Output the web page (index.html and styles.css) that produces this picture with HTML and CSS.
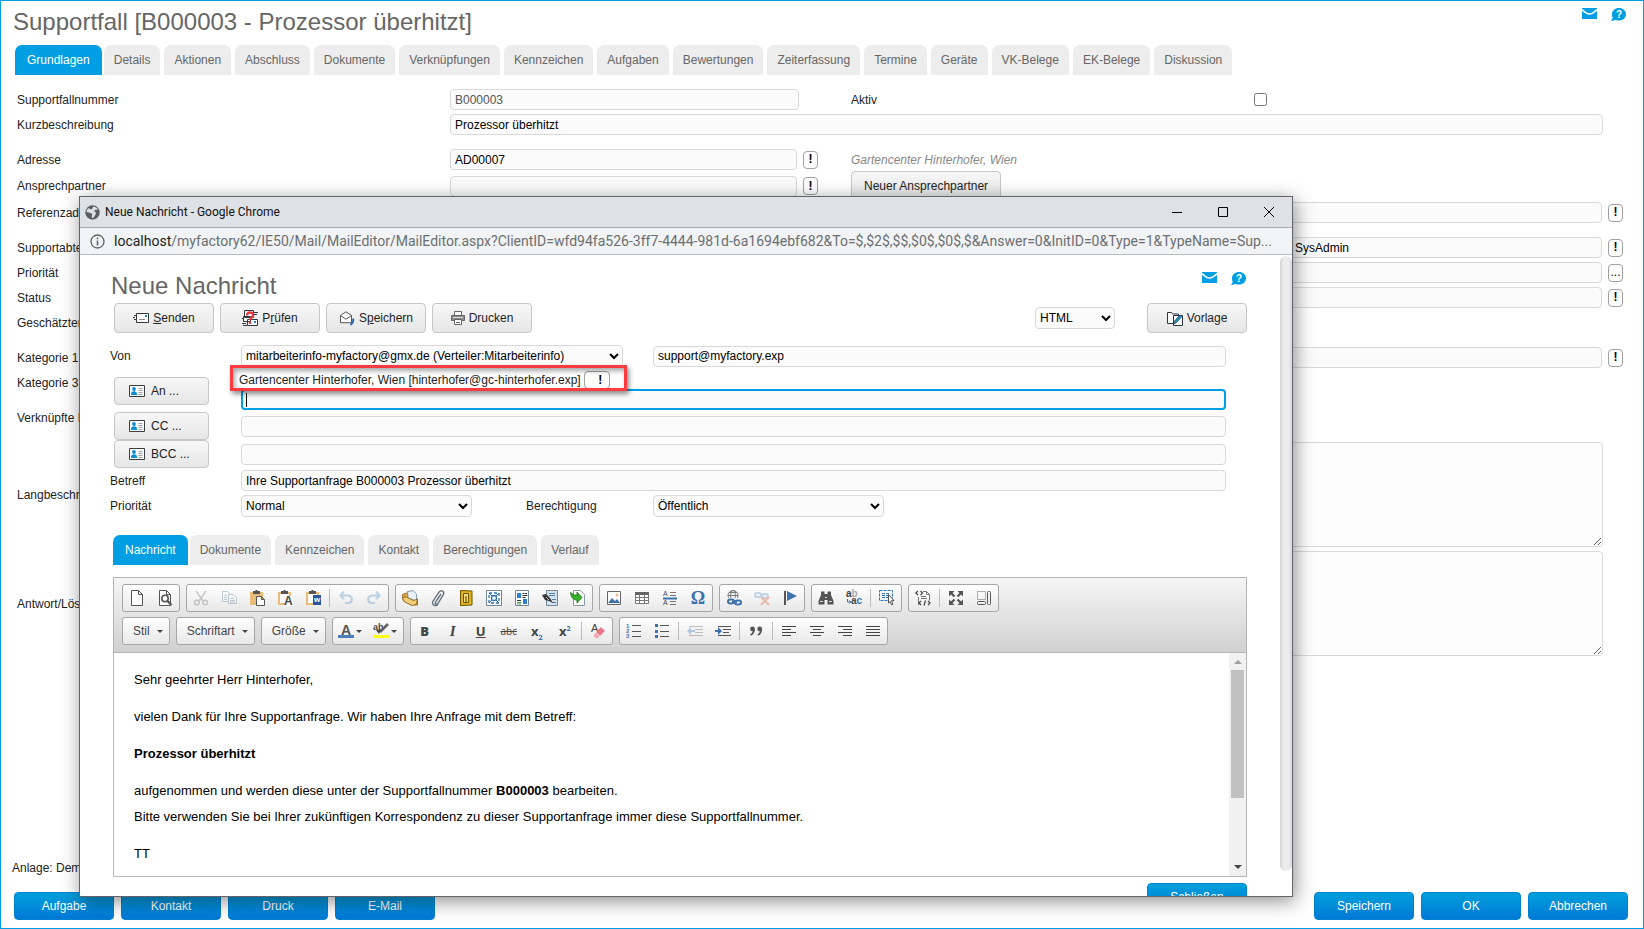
FILE: index.html
```html
<!DOCTYPE html>
<html lang="de">
<head>
    <meta charset="UTF-8">
    <meta name="viewport" content="width=device-width, initial-scale=1.0">
    <title>Supportfall</title>
    <link rel="stylesheet" href="styles.css">
</head>
<body>

    <!-- shared icons -->
    <svg class="sprite" aria-hidden="true">
        <symbol id="i-mail" viewBox="0 0 15 11">
            <path fill="#009fe3" d="M0 0h15v11H0z"/>
            <path fill="none" stroke="#fff" stroke-width="1.6" d="M0 1.6C3 4.6 5.4 6 7.5 6S12 4.6 15 1.6"/>
        </symbol>
        <symbol id="i-help" viewBox="0 0 15 13">
            <path fill="#009fe3" d="M8 0c4 0 7 2.700 7 6.300S12 12.600 8 12.600c-1.200 0-2.300-.2-3.200-.6L0 13l1.700-3C1.200 9 1 7.500 1 6.300 1 2.700 4 0 8 0z"/>
            <text x="8" y="10" text-anchor="middle" class="help-mark">?</text>
        </symbol>
        <symbol id="i-card" viewBox="0 0 16 12">
            <path fill="#fff" stroke="#3a3f44" d="M.5.5h15v11H.5z"/>
            <circle cx="5" cy="4" r="1.900" fill="#0a8fd0"/>
            <path fill="#0a8fd0" d="M2 10c0-3 1-3.700 3-3.700S8 7 8 10z"/>
            <path stroke="#9aa0a5" d="M9.500 3.500h4M9.500 5.500h4M9.500 7.500h4M9.500 9.500h4"/>
        </symbol>
    </svg>

    <div class="page">
        <div class="page-head">
            <h1>Supportfall [B000003 - Prozessor überhitzt]</h1>
            <div class="head-icons">
                <svg width="15" height="11"><use href="#i-mail"/></svg>
                <svg width="15" height="13"><use href="#i-help"/></svg>
            </div>
        </div>

        <nav class="tabs">
            <a class="tab active" href="#">Grundlagen</a>
            <a class="tab" href="#">Details</a>
            <a class="tab" href="#">Aktionen</a>
            <a class="tab" href="#">Abschluss</a>
            <a class="tab" href="#">Dokumente</a>
            <a class="tab" href="#">Verknüpfungen</a>
            <a class="tab" href="#">Kennzeichen</a>
            <a class="tab" href="#">Aufgaben</a>
            <a class="tab" href="#">Bewertungen</a>
            <a class="tab" href="#">Zeiterfassung</a>
            <a class="tab" href="#">Termine</a>
            <a class="tab" href="#">Geräte</a>
            <a class="tab" href="#">VK-Belege</a>
            <a class="tab" href="#">EK-Belege</a>
            <a class="tab" href="#">Diskussion</a>
        </nav>

        <form class="case-form">
            <div class="group">
                <div class="row">
                    <label for="nr">Supportfallnummer</label>
                    <div class="cell"><input class="field readonly" id="nr" type="text" value="B000003" readonly></div>
                    <label for="aktiv">Aktiv</label>
                    <div class="cell"><input id="aktiv" type="checkbox"></div>
                </div>
                <div class="row">
                    <label for="kurz">Kurzbeschreibung</label>
                    <div class="cell span"><input class="field" id="kurz" type="text" value="Prozessor überhitzt"></div>
                </div>
            </div>

            <div class="group address">
                <div class="row">
                    <label for="adr">Adresse</label>
                    <div class="cell"><input class="field" id="adr" type="text" value="AD00007"><button type="button" class="pick">!</button></div>
                    <i class="hint">Gartencenter Hinterhofer, Wien</i>
                </div>
                <div class="row tall">
                    <label for="ansp">Ansprechpartner</label>
                    <div class="cell"><input class="field" id="ansp" type="text"><button type="button" class="pick">!</button></div>
                    <div><button type="button" class="btn contact-btn">Neuer Ansprechpartner</button></div>
                </div>
                <div class="row">
                    <label for="ref">Referenzadresse</label>
                    <div class="cell last"><input class="field" id="ref" type="text"><button type="button" class="pick">!</button></div>
                </div>
            </div>

            <div class="group">
                <div class="row">
                    <label for="abt">Supportabteilung</label>
                    <div class="cell last"><input class="field user" id="abt" type="text" value="SysAdmin"><button type="button" class="pick">!</button></div>
                </div>
                <div class="row">
                    <label for="prio">Priorität</label>
                    <div class="cell last"><input class="field" id="prio" type="text"><button type="button" class="pick dots">...</button></div>
                </div>
                <div class="row">
                    <label for="status">Status</label>
                    <div class="cell last"><input class="field" id="status" type="text"><button type="button" class="pick">!</button></div>
                </div>
                <div class="row"><span>Geschätzter Aufwand</span></div>
            </div>

            <div class="group">
                <div class="row">
                    <label for="kat1">Kategorie 1</label>
                    <div class="cell last"><input class="field" id="kat1" type="text"><button type="button" class="pick">!</button></div>
                </div>
                <div class="row"><span>Kategorie 3</span></div>
            </div>

            <div class="group">
                <div class="row"><span>Verknüpfte Fälle</span></div>
            </div>

            <div class="row">
                <label for="lang">Langbeschreibung</label>
                <div class="cell span"><textarea class="field area" id="lang"></textarea></div>
            </div>
            <div class="row area-row">
                <label for="antwort">Antwort/Lösung</label>
                <div class="cell span"><textarea class="field area" id="antwort"></textarea></div>
            </div>
        </form>

        <div class="page-foot">
            <div class="tenant">Anlage: Demo</div>
            <div class="foot-buttons">
                <button type="button" class="btn-blue">Aufgabe</button>
                <button type="button" class="btn-blue">Kontakt</button>
                <button type="button" class="btn-blue">Druck</button>
                <button type="button" class="btn-blue">E-Mail</button>
                <span class="spacer"></span>
                <button type="button" class="btn-blue">Speichern</button>
                <button type="button" class="btn-blue">OK</button>
                <button type="button" class="btn-blue">Abbrechen</button>
            </div>
        </div>
    </div>

    <!-- mail window -->
    <div class="popup">
        <div class="titlebar">
            <svg width="15" height="15" viewBox="0 0 15 15"><circle cx="7.500" cy="7.500" r="7.200" fill="#5a5e63"/><path fill="#dee1e6" d="M3.200 3.200c1.300.2 1.800 1.100 3.200 1.100s.9-2 2.200-2.800c2 .4 3.600 1.700 4.200 3.200-1 .3-2-.2-2.900.4-.8.6-.5 1.700.4 2.200.8.500.8 1.500.2 2.300-.7 1-1 2.300-2.400 3.400l-1.300-.1c.4-1.300-.3-2.300.5-3.300.7-.9-.5-1.300-1.600-1.400S3.900 7.100 1.500 7.100c.1-1.600.7-2.900 1.700-3.900z"/></svg>
            <span class="window-name">Neue Nachricht - Google Chrome</span>
            <button type="button" class="win-btn" aria-label="Minimieren"><svg width="12" height="12" viewBox="0 0 12 12"><path stroke="#000" d="M1 6.500h10"/></svg></button>
            <button type="button" class="win-btn" aria-label="Maximieren"><svg width="12" height="12" viewBox="0 0 12 12"><path fill="none" stroke="#000" d="M1.500 1.500h9v9h-9z"/></svg></button>
            <button type="button" class="win-btn" aria-label="Fenster schließen"><svg width="12" height="12" viewBox="0 0 12 12"><path stroke="#000" d="M1 1l10 10M11 1L1 11"/></svg></button>
        </div>
        <div class="urlbar">
            <svg width="15" height="15" viewBox="0 0 15 15"><circle cx="7.500" cy="7.500" r="6.500" fill="none" stroke="#5f6368" stroke-width="1.300"/><path stroke="#5f6368" stroke-width="1.500" d="M7.500 6.500v5M7.500 3.600v1.600"/></svg>
            <span class="url"><b>localhost</b>/myfactory62/IE50/Mail/MailEditor/MailEditor.aspx?ClientID=wfd94fa526-3ff7-4444-981d-6a1694ebf682&amp;To=$,$2$,$$,$0$,$0$,$&amp;Answer=0&amp;InitID=0&amp;Type=1&amp;TypeName=Sup...</span>
        </div>

        <div class="popup-body">
            <div class="mail">
                <div class="mail-head">
                    <h2>Neue Nachricht</h2>
                    <div class="head-icons">
                        <svg width="15" height="11"><use href="#i-mail"/></svg>
                        <svg width="15" height="13"><use href="#i-help"/></svg>
                    </div>
                </div>

                <div class="actions">
                    <button type="button" class="btn action"><svg width="16" height="10" viewBox="0 0 16 10"><path fill="#fff" stroke="#34383c" d="M3.500.5h12v9h-12z"/><path stroke="#34383c" stroke-width="1.200" d="M1 2.500h2M0 4.500h2M1 6.500h2"/><path fill="#2a7ac0" d="M12 2h2v2h-2z"/><path stroke="#888" d="M6 6.500h6"/></svg><span><u>S</u>enden</span></button>
                    <button type="button" class="btn action"><svg width="16" height="16" viewBox="0 0 16 16"><path fill="#fff" stroke="#34383c" d="M2.500.5h9v7h-9zM1.500 6.500h7v5h-7zM5.500 9.500h10v6h-10z"/><path stroke="#34383c" d="M12 2.500h4M12 4.500h3M0 8.500h2M0 13.500h4M1 15.500h4"/><path fill="none" stroke="#e8393f" stroke-width="2.400" d="M5 5.500C4.800 1.500 11.200 1.500 11 5 11 7.500 8 7.200 8 10"/><path fill="#e8393f" d="M6.800 11.500h2.400V14H6.800z"/><path fill="#2a7ac0" d="M12 11h2v2h-2z"/></svg><span>P<u>r</u>üfen</span></button>
                    <button type="button" class="btn action"><svg width="16" height="15" viewBox="0 0 16 15"><path fill="#fff" stroke="#555" d="M1.500 4.500L7 .8l5.500 3.700v7.200h-11z"/><path fill="none" stroke="#555" d="M1.500 4.500L7 8.200l5.500-3.700"/><path stroke="#2a6ab0" stroke-width="2" fill="none" d="M14 7.500c.8 2.500 0 4.500-2.500 6.500"/></svg><span>S<u>p</u>eichern</span></button>
                    <button type="button" class="btn action"><svg width="14" height="14" viewBox="0 0 14 14"><path fill="#fff" stroke="#666" d="M3.500.5h7v4h-7z"/><path fill="#8a8a8a" stroke="#666" d="M.5 4.500h13v5H.5z"/><path fill="#fff" stroke="#666" d="M3.500 8.500h7v5h-7z"/><path stroke="#666" d="M5 11.500h4"/><path stroke="#ddd" d="M2 6.500h10"/></svg><span>Drucken</span></button>
                    <span class="spacer"></span>
                    <select class="field format" aria-label="Format"><option>HTML</option></select>
                    <button type="button" class="btn action"><svg width="16" height="15" viewBox="0 0 16 15"><path fill="#fff" stroke="#2b3440" d="M.5 12.500v-11h4l1 1.500h6v9.500z"/><path fill="#fff" stroke="#2b3440" d="M6.500 4.500h9v10h-9z"/><path fill="#1590c8" stroke="#2b3440" stroke-width=".7" d="M6.500 13l1-3 5.500-6 1.800 1.600-5.500 6.200z"/></svg><span>Vorlage</span></button>
                </div>

                <form class="mail-form">
                    <div class="mrow">
                        <label for="von">Von</label>
                        <select class="field from" id="von"><option>mitarbeiterinfo-myfactory@gmx.de (Verteiler:Mitarbeiterinfo)</option></select>
                        <input class="field" type="text" aria-label="Absender" value="support@myfactory.exp">
                    </div>
                    <div class="mrow to-row">
                        <button type="button" class="btn book"><svg width="16" height="12"><use href="#i-card"/></svg>An ...</button>
                        <div class="wide">
                            <div class="recipient">
                                <span>Gartencenter Hinterhofer, Wien [hinterhofer@gc-hinterhofer.exp]</span>
                                <button type="button" class="pick recipient-pick">!</button>
                                <div class="highlight"></div>
                            </div>
                            <div class="focus-wrap">
                                <input class="field focused" type="text" aria-label="An">
                                <i class="caret"></i>
                            </div>
                        </div>
                    </div>
                    <div class="mrow">
                        <button type="button" class="btn book"><svg width="16" height="12"><use href="#i-card"/></svg>CC ...</button>
                        <input class="field wide" type="text" aria-label="CC">
                    </div>
                    <div class="mrow">
                        <button type="button" class="btn book"><svg width="16" height="12"><use href="#i-card"/></svg>BCC ...</button>
                        <input class="field wide" type="text" aria-label="BCC">
                    </div>
                    <div class="mrow subject-row">
                        <label for="betreff">Betreff</label>
                        <input class="field wide" id="betreff" type="text" value="Ihre Supportanfrage B000003 Prozessor überhitzt">
                    </div>
                    <div class="mrow">
                        <label for="mprio">Priorität</label>
                        <select class="field short" id="mprio"><option>Normal</option></select>
                        <label for="recht">Berechtigung</label>
                        <select class="field short" id="recht"><option>Öffentlich</option></select>
                    </div>
                </form>

                <nav class="tabs mail-tabs">
                    <a class="tab active" href="#">Nachricht</a>
                    <a class="tab" href="#">Dokumente</a>
                    <a class="tab" href="#">Kennzeichen</a>
                    <a class="tab" href="#">Kontakt</a>
                    <a class="tab" href="#">Berechtigungen</a>
                    <a class="tab" href="#">Verlauf</a>
                </nav>

                <div class="editor">
                    <div class="toolbar">
                        <div class="tool-row">
                            <div class="tool-group">
                                <button type="button" class="tool" aria-label="Neue Seite"><svg viewBox="0 0 16 16"><path fill="#fff" stroke="#555" d="M2.500.5h7l4 4v11h-11zM9.500.5v4h4"/></svg></button>
                                <button type="button" class="tool" aria-label="Vorschau"><svg viewBox="0 0 16 16"><path fill="#fff" stroke="#555" d="M2.500.5h7l4 4v11h-11zM9.500.5v4h4"/><circle cx="8" cy="8.500" r="3.200" fill="#fff" stroke="#555" stroke-width="1.600"/><path stroke="#555" stroke-width="2.400" d="M10.500 11l4 4"/></svg></button>
                            </div>
                            <div class="tool-group">
                                <button type="button" class="tool off" aria-label="Ausschneiden"><svg viewBox="0 0 16 16"><g fill="none" stroke="#777" stroke-width="1.500"><path d="M3 1l7 10M13 1L6 11"/><circle cx="3.800" cy="12.500" r="2.300"/><circle cx="12.200" cy="12.500" r="2.300"/></g></svg></button>
                                <button type="button" class="tool off" aria-label="Kopieren"><svg viewBox="0 0 16 16"><path fill="#fff" stroke="#567a9f" d="M1.500 1.500h5l3 3v7h-8z"/><path fill="#fff" stroke="#567a9f" d="M7.500 4.500h5l3 3v6h-8z"/><path stroke="#567a9f" d="M3 5.500h3M3 7.500h3M3 9.500h3M9 8.500h4M9 10.500h5M9 12h5"/></svg></button>
                                <button type="button" class="tool" aria-label="Einfügen"><svg viewBox="0 0 16 16"><path fill="#e8bd7c" d="M1 2h13v13H1z"/><path fill="#555" d="M4 1h2l1-1h1l1 1h2v3H4z"/><path fill="#fff" stroke="#555" d="M7.500 6.500h5l3 3v6h-8zM12.500 6.500v3h3"/></svg></button>
                                <button type="button" class="tool" aria-label="Als Text einfügen"><svg viewBox="0 0 16 16"><path fill="#fff" stroke="#e8bd7c" stroke-width="2" d="M2 3h11v11H2z"/><path fill="#555" d="M4 1h2l1-1h1l1 1h2v3H4z"/><path fill="#fff" d="M8 6h8v10H8z"/><text x="7" y="15" class="t-paste">A</text></svg></button>
                                <button type="button" class="tool" aria-label="Aus Word einfügen"><svg viewBox="0 0 16 16"><path fill="#fff" stroke="#e8bd7c" stroke-width="2" d="M2 3h11v11H2z"/><path fill="#555" d="M4 1h2l1-1h1l1 1h2v3H4z"/><path fill="#2b579a" d="M8 5h8v10H8z"/><text x="9" y="12" class="t-word">w</text></svg></button>
                                <span class="tool-sep"></span>
                                <button type="button" class="tool off" aria-label="Rückgängig"><svg viewBox="0 0 16 16"><path fill="none" stroke="#5b8fbd" stroke-width="2.200" d="M6 1.500L2.500 5.500 6 9M3 5.500h7c5 0 5 7.500 0 7.500H7"/></svg></button>
                                <button type="button" class="tool off" aria-label="Wiederholen"><svg viewBox="0 0 16 16"><path fill="none" stroke="#5b8fbd" stroke-width="2.200" d="M10 1.500l3.500 4L10 9M13 5.500H6c-5 0-5 7.500 0 7.500h3"/></svg></button>
                            </div>
                            <div class="tool-group">
                                <button type="button" class="tool" aria-label="Öffnen"><svg viewBox="0 0 16 16"><path fill="#d9a441" stroke="#8a6420" stroke-width=".8" d="M.5 4.500L4 3l11.500 6v6H9L1 10.500z"/><path fill="#e9f0f7" stroke="#6a86a5" stroke-width=".8" d="M5.500 1.500L11 .6 14.500 4v7L6 8z"/><path fill="#f3cc78" stroke="#8a6420" stroke-width=".8" d="M.5 7.500l4-.5 7 3.500 4-1.500-1.500 5.500-4 1L2 11.500z"/></svg></button>
                                <button type="button" class="tool" aria-label="Anhang"><svg viewBox="0 0 16 16"><path fill="none" stroke="#66727e" stroke-width="1.400" d="M11 4L5.500 12c-1 1.800 1.400 3 2.500 1.300l5.300-8.600C15 1.500 11 -.7 9 2.200L3 11c-2 3.800 3 6 5 3"/></svg></button>
                                <button type="button" class="tool" aria-label="Bildrahmen"><svg viewBox="0 0 16 16"><path fill="#e2b61f" stroke="#6b5200" d="M2.500.5l11.500.500v14l-11.500.500z"/><path fill="#fbe58a" stroke="#6b5200" d="M5.500 3.500h5v9h-5z"/><path fill="#a88a20" d="M8 5l1.500 3H9v4H7V8h-.5z"/></svg></button>
                                <button type="button" class="tool" aria-label="Bildgröße"><svg viewBox="0 0 16 16"><path fill="#fff" stroke="#6f8799" d="M.5.5h15v15H.5z"/><path fill="none" stroke="#2e72b5" stroke-width="1.300" stroke-dasharray="3 2" d="M3 3h10v10H3z"/><circle cx="8" cy="8" r="2.500" fill="none" stroke="#2e72b5" stroke-width="1.300"/><path stroke="#2e72b5" d="M3 3l3 3M13 3l-3 3M3 13l3-3M13 13l-3-3"/></svg></button>
                                <button type="button" class="tool" aria-label="Vorlagen"><svg viewBox="0 0 16 16"><path fill="#fff" stroke="#6f8799" d="M1.500.5h13v15h-13z"/><path fill="#2b7fd0" d="M3 3h4v5H3zM9 9h4v5H9z"/><path stroke="#333" d="M8.500 3.500h2M11 3.500h2M8.500 5.500h5M8.500 7.500h3M3 10.500h4"/><path stroke="#3aa04a" d="M3 12.500h4M3 14h4"/></svg></button>
                                <button type="button" class="tool" aria-label="Signatur"><svg viewBox="0 0 16 16"><path fill="#d4e1ec" stroke="#6f8799" d="M4.500.5h11v15h-11z"/><path stroke="#5580a5" d="M7 3.500h6M7 5.500h6M10 9.500h4M10 12.500h4"/><path fill="#333" d="M0 5l4-1 4 4 3 5-4-2-4-1z"/><path stroke="#ddd" stroke-width=".8" d="M4 7l3 3"/></svg></button>
                                <button type="button" class="tool" aria-label="Exportieren"><svg viewBox="0 0 16 16"><path fill="#fff" stroke="#8a9aaa" d="M3.500.5h7l4 4v11h-11z"/><path fill="#35b52a" stroke="#1b6b13" stroke-width=".8" d="M.5 2.500l3.500 2.500h3V2l5 5.500L7 13v-3C3 10 1 7 .5 2.500z"/></svg></button>
                            </div>
                            <div class="tool-group">
                                <button type="button" class="tool" aria-label="Bild"><svg viewBox="0 0 16 16"><path fill="#fff" stroke="#666" d="M1.500 1.500h13v13h-13z"/><path fill="#3d72ad" d="M2 13l4-5 3 3 2-2 3 4z"/><circle cx="11" cy="5" r="1.500" fill="#f0b878"/></svg></button>
                                <button type="button" class="tool" aria-label="Tabelle"><svg viewBox="0 0 16 16"><path fill="#fff" stroke="#777" d="M1.500 2.500h13v11h-13zM1.500 7.500h13M1.500 10.500h13M5.500 4v9M10.500 4v9"/><path fill="#666" d="M1 2h14v3H1z"/></svg></button>
                                <button type="button" class="tool" aria-label="Horizontale Linie"><svg viewBox="0 0 16 16"><path stroke="#777" d="M8 2.500h6M8 5.500h6M8 11.500h6M8 14.500h6"/><path stroke="#3d72ad" stroke-width="2" d="M1 8.500h14"/><text x="1" y="6" class="t-rule">A</text><text x="1" y="15" class="t-rule">A</text></svg></button>
                                <button type="button" class="tool omega" aria-label="Sonderzeichen">Ω</button>
                            </div>
                            <div class="tool-group">
                                <button type="button" class="tool" aria-label="Link"><svg viewBox="0 0 16 16"><g fill="none" stroke="#777"><circle cx="7" cy="5.500" r="5"/><path d="M2 5.500h10M3 2.500h8"/><ellipse cx="7" cy="5.500" rx="2.300" ry="5"/></g><path fill="#f7f7f7" d="M1 8h15v8H1z"/><g fill="none" stroke="#3d72ad" stroke-width="2"><rect x="2" y="9.500" width="6" height="4" rx="2"/><rect x="9" y="10.500" width="6" height="4" rx="2"/><path d="M6 12h5"/></g></svg></button>
                                <button type="button" class="tool off" aria-label="Link entfernen"><svg viewBox="0 0 16 16"><g fill="none" stroke="#5b8fbd" stroke-width="2"><rect x="1" y="3" width="6" height="4" rx="2"/><rect x="8" y="4" width="6" height="4" rx="2"/></g><path stroke="#dd5b3a" stroke-width="2.200" d="M7 7l8 8M15 7l-8 8"/></svg></button>
                                <button type="button" class="tool" aria-label="Anker"><svg viewBox="0 0 16 16"><path fill="#555" d="M2 1h2v14H2z"/><path fill="#3d72ad" d="M5 1l10 5-10 5z"/></svg></button>
                            </div>
                            <div class="tool-group">
                                <button type="button" class="tool" aria-label="Suchen"><svg viewBox="0 0 16 16"><path fill="#555" d="M3 1.500h3.500V4h3V1.500H13V5l2.500 6v3.500H9.500V10h-3v4.500H.5V11L3 5z"/><path stroke="#ddd" d="M2 11.500h3M11 11.500h3M7 7.500h2"/></svg></button>
                                <button type="button" class="tool" aria-label="Ersetzen"><svg viewBox="0 0 16 16"><text x="0" y="7" class="t-repl">a<tspan fill="#aaa">b</tspan></text><path fill="none" stroke="#3d72ad" d="M1.500 9v3h3M3 10.500L4.800 12 3 13.500"/><text x="5" y="14" class="t-repl">a<tspan fill="#3d72ad">c</tspan></text></svg></button>
                                <span class="tool-sep"></span>
                                <button type="button" class="tool" aria-label="Alles auswählen"><svg viewBox="0 0 16 16"><path fill="none" stroke="#2e72b5" stroke-dasharray="3 1" d="M.5.5h13v10H.5z"/><path stroke="#2e72b5" stroke-dasharray="3 1" d="M3 3.500h8M3 5.500h6M3 7.500h6"/><path fill="#fff" stroke="#555" d="M9.500 4.500l5.500 6-2.500.2 1.500 3.500-1.500.6-1.300-3.300-1.700 1.700z"/></svg></button>
                            </div>
                            <div class="tool-group">
                                <button type="button" class="tool" aria-label="Quellcode"><svg viewBox="0 0 16 16"><path fill="#fff" stroke="#777" d="M8 1.500h3.500l3 3v6M3.500 7v7.500h1M11.500 1.500v3h3"/><path fill="none" stroke="#444" stroke-width="1.200" d="M3 1L.8 3 3 5M5.500 1L7.500 3 5.500 5M6 11l-2 2 2 2M13 11l2 2-2 2M10.500 10.500l-1.500 5"/><path stroke="#777" d="M6 6.500h5M6 8.500h6"/></svg></button>
                                <span class="tool-sep"></span>
                                <button type="button" class="tool" aria-label="Maximieren"><svg viewBox="0 0 16 16"><path fill="#555" d="M1 1h5.500L1 6.500zM15 1v5.500L9.500 1zM1 15V9.500L6.500 15zM15 15H9.500L15 9.500z"/><path stroke="#555" stroke-width="2.200" d="M2.500 2.500l4 4M13.500 2.500l-4 4M2.500 13.500l4-4M13.500 13.500l-4-4"/></svg></button>
                                <button type="button" class="tool" aria-label="Blöcke anzeigen"><svg viewBox="0 0 16 16"><path fill="none" stroke="#666" stroke-dasharray="1 1" d="M1.500 1.500h8v8h-8z"/><rect x="11.500" y="1.500" width="3" height="13" rx="1" fill="none" stroke="#555"/><rect x="1.500" y="11.500" width="8" height="3" rx="1" fill="none" stroke="#555"/></svg></button>
                            </div>
                        </div>
                        <div class="tool-row">
                            <button type="button" class="tool-combo">Stil<i class="arrow"></i></button>
                            <button type="button" class="tool-combo">Schriftart<i class="arrow"></i></button>
                            <button type="button" class="tool-combo">Größe<i class="arrow"></i></button>
                            <div class="tool-group">
                                <button type="button" class="tool color" aria-label="Textfarbe"><svg viewBox="0 0 16 16"><path fill="#4a7ebb" d="M0 12h16v3H0z"/><text x="3" y="12" class="t-color">A</text></svg><i class="arrow"></i></button>
                                <button type="button" class="tool color" aria-label="Hintergrundfarbe"><svg viewBox="0 0 16 16"><path fill="#ffff1a" d="M0 12h16v3H0z"/><text x="0" y="7" class="t-mark">ab</text><path stroke="#666" stroke-width="2.600" d="M15 1L7 9"/><path fill="#444" d="M3 7h5l-2 4z"/></svg><i class="arrow"></i></button>
                            </div>
                            <div class="tool-group">
                                <button type="button" class="tool glyph"><b>B</b></button>
                                <button type="button" class="tool glyph serif"><i>I</i></button>
                                <button type="button" class="tool glyph"><u>U</u></button>
                                <button type="button" class="tool glyph strike"><s>abc</s></button>
                                <button type="button" class="tool glyph">x<sub>2</sub></button>
                                <button type="button" class="tool glyph">x<sup>2</sup></button>
                                <span class="tool-sep"></span>
                                <button type="button" class="tool" aria-label="Formatierung entfernen"><svg viewBox="0 0 16 16"><text x="1" y="9" class="t-clear">A</text><path fill="#e8798a" d="M11 4l4 4-5 5-4-4z"/><path fill="#f3a6b1" d="M5.500 9.500l4 4L8 15H5.500L3.500 13z"/></svg></button>
                            </div>
                            <div class="tool-group">
                                <button type="button" class="tool" aria-label="Nummerierte Liste"><svg viewBox="0 0 16 16"><path stroke="#555" d="M6 2.500h9M6 8.500h9M6 13.500h9"/><text x="0" y="5" class="t-num">1</text><text x="0" y="10" class="t-num">2</text><text x="0" y="15" class="t-num">3</text></svg></button>
                                <button type="button" class="tool" aria-label="Aufzählung"><svg viewBox="0 0 16 16"><path stroke="#555" d="M6 2.500h9M6 8.500h9M6 13.500h9"/><path fill="#3d72ad" d="M1 1h3v3H1zM1 7h3v3H1zM1 12h3v3H1z"/></svg></button>
                                <span class="tool-sep"></span>
                                <button type="button" class="tool off" aria-label="Einzug verkleinern"><svg viewBox="0 0 16 16"><path stroke="#555" d="M2 3.500h14M8 6.500h8M8 9.500h8M2 12.500h14"/><path fill="#3d72ad" d="M0 8l4-4v3h4v2H4v3z"/></svg></button>
                                <button type="button" class="tool" aria-label="Einzug vergrößern"><svg viewBox="0 0 16 16"><path stroke="#555" d="M3 3.500h13M8 6.500h8M8 9.500h6M3 12.500h13"/><path fill="#3d72ad" d="M7 8L3 4v3H0v2h3v3z"/></svg></button>
                                <span class="tool-sep"></span>
                                <button type="button" class="tool" aria-label="Zitat"><svg viewBox="0 0 16 16"><path fill="none" stroke="#555" stroke-width="1.800" d="M6 6c0 3-1 5-3.500 6M13.200 6c0 3-1 5-3.500 6"/><circle cx="4.500" cy="6" r="2.400" fill="#555"/><circle cx="11.700" cy="6" r="2.400" fill="#555"/></svg></button>
                                <span class="tool-sep"></span>
                                <button type="button" class="tool" aria-label="Linksbündig"><svg viewBox="0 0 16 16"><path stroke="#444" d="M1 3.500h14M1 6.500h9M1 9.500h14M1 12.500h9"/></svg></button>
                                <button type="button" class="tool" aria-label="Zentriert"><svg viewBox="0 0 16 16"><path stroke="#444" d="M1 3.500h14M4 6.500h8M1 9.500h14M4 12.500h8"/></svg></button>
                                <button type="button" class="tool" aria-label="Rechtsbündig"><svg viewBox="0 0 16 16"><path stroke="#444" d="M1 3.500h14M6 6.500h9M1 9.500h14M6 12.500h9"/></svg></button>
                                <button type="button" class="tool" aria-label="Blocksatz"><svg viewBox="0 0 16 16"><path stroke="#444" d="M1 3.500h14M1 6.500h14M1 9.500h14M1 12.500h14"/></svg></button>
                            </div>
                        </div>
                    </div>
                    <div class="editor-main">
                        <div class="message">
                            <p>Sehr geehrter Herr Hinterhofer,</p>
                            <p>vielen Dank für Ihre Supportanfrage. Wir haben Ihre Anfrage mit dem Betreff:</p>
                            <p><b>Prozessor überhitzt</b></p>
                            <p>aufgenommen und werden diese unter der Supportfallnummer <b>B000003</b> bearbeiten.<br>Bitte verwenden Sie bei Ihrer zukünftigen Korrespondenz zu dieser Supportanfrage immer diese Supportfallnummer.</p>
                            <p>TT</p>
                        </div>
                        <div class="scroll">
                            <i class="scroll-up"></i>
                            <div class="scroll-thumb"></div>
                            <i class="scroll-down"></i>
                        </div>
                    </div>
                </div>

                <div class="mail-foot">
                    <button type="button" class="btn-blue">Schließen</button>
                </div>
            </div>
            <div class="side-scroll"></div>
        </div>
    </div>

</body>
</html>
```
FILE: styles.css
```css
* {
    box-sizing: border-box;
}

body {
    margin: 0;
    font-family: "Liberation Sans", Arial, sans-serif;
    font-size: 12px;
    color: #222;
    background: #fff;
}

button, input, select, textarea {
    font-family: inherit;
    font-size: 12px;
    margin: 0;
}

.sprite {
    display: none;
}

.help-mark {
    font-size: 10px;
    font-weight: bold;
    fill: #fff;
}

.spacer {
    flex: 1;
}

/* support case page */

.page {
    display: flex;
    flex-direction: column;
    min-height: 100vh;
    border: 1px solid #009fe3;
}

.page-head {
    display: flex;
    justify-content: space-between;
    height: 44px;
    padding: 7px 17px 0 12px;
}

h1, h2 {
    margin: 0;
    font-size: 24px;
    line-height: 28px;
    font-weight: normal;
    color: #666;
}

.head-icons {
    display: flex;
    gap: 14px;
}

.tabs {
    display: flex;
    gap: 4px;
    padding-left: 14px;
}

.tab {
    height: 30px;
    padding: 0 10px;
    line-height: 30px;
    color: #666;
    text-decoration: none;
    background: #ededed;
    border-radius: 7px 7px 0 0;
}

.tab.active {
    padding: 0 12px;
    margin-right: -2px;
    color: #fff;
    background: #009fe3;
}

.case-form {
    padding: 14px 16px 0 16px;
}

.group {
    display: flex;
    flex-direction: column;
    gap: 4px;
    margin-bottom: 14px;
}

.group.address {
    gap: 5px;
}

.row {
    display: grid;
    grid-template-columns: 433fr 401fr 403fr 373fr;
    align-items: center;
    min-height: 21px;
}

.row.tall {
    height: 22px;
}

.area-row {
    margin-top: 4px;
}

.row > * {
    min-width: 0;
}

.cell {
    display: flex;
    align-items: center;
    gap: 6px;
    padding-right: 52px;
}

.cell:has(.pick) {
    padding-right: 33px;
}

.cell.span {
    grid-column: 2 / 5;
    padding-right: 24px;
}

.cell.last {
    grid-column: 4;
    padding-right: 4px;
}

.cell input[type="checkbox"] {
    width: 13px;
    height: 13px;
}

.field {
    width: 100%;
    min-width: 0;
    height: 21px;
    padding: 0 4px;
    color: #000;
    background: #fbfbfb;
    border: 1px solid #d9d9d9;
    border-radius: 4px;
    outline: none;
}

select.field {
    height: 22px;
    padding: 0;
}

.field.readonly {
    color: #555;
}

.field.user {
    padding-left: 40px;
}

.field.area {
    display: block;
    height: 105px;
    background: #fdfdfd;
}

.pick {
    flex: none;
    width: 15px;
    height: 18px;
    padding: 0;
    font-weight: bold;
    line-height: 15px;
    color: #000;
    background: #fff;
    border: 1px solid #a0a0a0;
    border-radius: 4px;
}

.pick.dots {
    font-weight: normal;
}

.hint {
    color: #888;
}

.btn {
    height: 30px;
    padding: 0 12px;
    color: #222;
    background: linear-gradient(#f7f7f7, #e6e6e6);
    border: 1px solid #c6c6c6;
    border-radius: 4px;
    white-space: nowrap;
}

/* taller than its row */
.contact-btn {
    display: block;
    margin: -4px 0;
}

.btn-blue {
    width: 100px;
    height: 28px;
    padding: 0;
    color: #fff;
    background: linear-gradient(#00a0dc, #0078d7);
    border: 1px solid #0083cc;
    border-radius: 4px;
}

.page-foot {
    margin-top: auto;
    padding: 0 15px 8px 11px;
}

.tenant {
    margin-bottom: 16px;
    line-height: 16px;
}

.foot-buttons {
    display: flex;
    gap: 7px;
    padding-left: 2px;
}

/* browser window with the mail form */

.popup {
    position: absolute;
    top: 196px;
    right: 351px;
    bottom: 32px;
    left: 79px;
    display: flex;
    flex-direction: column;
    overflow: hidden;
    background: #fff;
    border: 1px solid #63656a;
    box-shadow: 2px 4px 18px rgba(0, 0, 0, 0.45);
}

.titlebar {
    display: flex;
    align-items: center;
    flex: none;
    height: 31px;
    padding: 0 0 0 5px;
    font-family: Roboto, "Noto Sans", sans-serif;
    color: #111;
    background: #dee1e6;
    border-bottom: 1px solid #a9abaf;
}

.window-name {
    flex: 1;
    padding-left: 5px;
}

.win-btn {
    width: 46px;
    height: 30px;
    padding: 0;
    background: none;
    border: none;
}

.win-btn svg {
    display: block;
    margin: 0 auto;
}

.urlbar {
    display: flex;
    align-items: center;
    flex: none;
    gap: 9px;
    height: 27px;
    padding: 0 0 0 10px;
    font-family: Roboto, "Noto Sans", sans-serif;
    font-size: 14px;
    color: #6b6f73;
    background: #f1f3f4;
    border-bottom: 1px solid #b9bbbe;
}

.urlbar svg {
    flex: none;
}

.url {
    white-space: nowrap;
}

.url b {
    font-weight: normal;
    color: #222;
}

.popup-body {
    display: flex;
    flex: 1;
    min-height: 0;
}

.mail {
    flex: 1;
    min-width: 0;
    padding: 17px 33px 0 30px;
}

.side-scroll {
    width: 12px;
    margin: 1px 0 25px;
    background: linear-gradient(to right, #d2d2d2, #ececec 30%, #ececec 70%, #d8d8d8);
    border-radius: 6px;
}

.mail-head {
    display: flex;
    justify-content: space-between;
    height: 31px;
    padding-right: 1px;
    padding-left: 1px;
}

.actions {
    display: flex;
    align-items: center;
    gap: 6px;
    padding-left: 4px;
}

.action {
    display: flex;
    align-items: center;
    justify-content: center;
    gap: 4px;
    width: 100px;
    padding: 0;
}

.field.format {
    width: 80px;
    margin-right: 26px;
}

.mail-form {
    padding: 12px 21px 0 0;
}

.mrow {
    display: grid;
    grid-template-columns: 131px 285fr 127fr 573fr;
    align-items: center;
}

.mrow .from {
    grid-column: 2 / 4;
    width: auto;
    margin-right: 30px;
}

.mrow .wide {
    grid-column: 2 / 5;
    min-width: 0;
}

.mrow .short {
    width: 231px;
}

.to-row {
    align-items: start;
    margin-bottom: 2px;
}

.to-row .book {
    margin-top: 10px;
}

.subject-row {
    margin: 2px 0 4px;
}

.book {
    display: flex;
    align-items: center;
    gap: 6px;
    width: 95px;
    height: 28px;
    margin-left: 4px;
    padding: 0 14px;
}

.recipient {
    position: relative;
    display: inline-flex;
    align-items: center;
    gap: 3px;
    height: 22px;
    margin-left: -2px;
    padding-top: 4px;
    vertical-align: top;
    white-space: nowrap;
}

.recipient-pick {
    width: 26px;
    padding-left: 7px;
}

/* red marker frame around the recipient */
.highlight {
    position: absolute;
    top: -2px;
    right: -17px;
    bottom: -2px;
    left: -9px;
    z-index: 1;
    border: 3px solid #fb3b40;
    box-shadow: 2px 3px 5px rgba(0, 0, 0, 0.45), inset 2px 3px 5px rgba(0, 0, 0, 0.35);
    pointer-events: none;
}

.focus-wrap {
    position: relative;
}

.field.focused {
    display: block;
    border: 2px solid #009fe3;
}

.caret {
    position: absolute;
    top: 4px;
    left: 5px;
    width: 1px;
    height: 14px;
    background: #000;
}

.mail-tabs {
    padding: 18px 0 12px 3px;
}

.editor {
    margin-left: 3px;
    border: 1px solid #b6b6b6;
}

.toolbar {
    display: flex;
    flex-direction: column;
    gap: 5px;
    padding: 6px 8px 7px;
    background: linear-gradient(#f6f6f6, #cfd1cf);
    border-bottom: 1px solid #b6b6b6;
}

.tool-row {
    display: flex;
    gap: 6px;
}

.tool-group, .tool-combo {
    display: flex;
    align-items: center;
    height: 28px;
    background: linear-gradient(#fff, #e8e8e8);
    border: 1px solid #a6a6a6;
    border-radius: 3px;
}

.tool {
    display: flex;
    align-items: center;
    justify-content: center;
    width: 28px;
    height: 26px;
    padding: 0;
    background: none;
    border: none;
}

.tool svg {
    display: block;
    flex: none;
    width: 16px;
    height: 16px;
    overflow: visible;
}

.tool.off {
    opacity: 0.35;
}

.tool.color {
    gap: 2px;
    width: 35px;
}

.tool-sep {
    width: 1px;
    height: 18px;
    margin: 0 2px;
    background: #bcbcbc;
}

.tool-combo {
    gap: 7px;
    padding: 0 6px 0 10px;
    color: #444;
}

.arrow {
    border-top: 3px solid #444;
    border-right: 3px solid transparent;
    border-left: 3px solid transparent;
}

.tool.omega {
    font-family: "Liberation Serif", serif;
    font-size: 18px;
    font-weight: bold;
    color: #3d72ad;
}

.tool.glyph {
    display: block;
    font-family: "Open Sans", sans-serif;
    font-size: 13px;
    font-weight: bold;
    line-height: 24px;
    color: #444;
}

.tool.glyph.serif {
    font-family: "Liberation Serif", serif;
    font-size: 15px;
}

.tool.glyph.strike {
    font-size: 10px;
    font-weight: normal;
}

.glyph sub, .glyph sup {
    font-size: 7px;
    line-height: 0;
    color: #3d72ad;
}

.t-paste {
    font-size: 12px;
    font-weight: bold;
    fill: #444;
}

.t-word {
    font-size: 8px;
    font-weight: bold;
    fill: #fff;
}

.t-rule {
    font-size: 7px;
    fill: #444;
}

.t-repl {
    font-size: 10px;
    font-weight: bold;
    fill: #444;
}

.t-color {
    font-size: 14px;
    font-weight: bold;
    fill: #555;
}

.t-mark {
    font-size: 9px;
    font-weight: bold;
    fill: #444;
}

.t-clear {
    font-size: 11px;
    fill: #444;
}

.t-num {
    font-size: 6px;
    font-weight: bold;
    fill: #3d72ad;
}

.editor-main {
    display: flex;
    height: 223px;
    overflow: hidden;
}

.message {
    flex: 1;
    padding: 14px 20px 0;
    font-size: 13px;
    line-height: 26px;
    color: #000;
}

.message p {
    margin: 0 0 11px;
}

.scroll {
    display: flex;
    flex-direction: column;
    align-items: center;
    width: 17px;
    padding: 7px 0;
    background: #f1f1f1;
}

.scroll-thumb {
    width: 13px;
    height: 128px;
    margin: 6px 0 auto;
    background: #c1c1c1;
}

.scroll-up {
    border-right: 4px solid transparent;
    border-bottom: 4px solid #a0a0a0;
    border-left: 4px solid transparent;
}

.scroll-down {
    border-top: 4px solid #444;
    border-right: 4px solid transparent;
    border-left: 4px solid transparent;
}

.mail-foot {
    display: flex;
    justify-content: flex-end;
    padding-top: 6px;
}
```
